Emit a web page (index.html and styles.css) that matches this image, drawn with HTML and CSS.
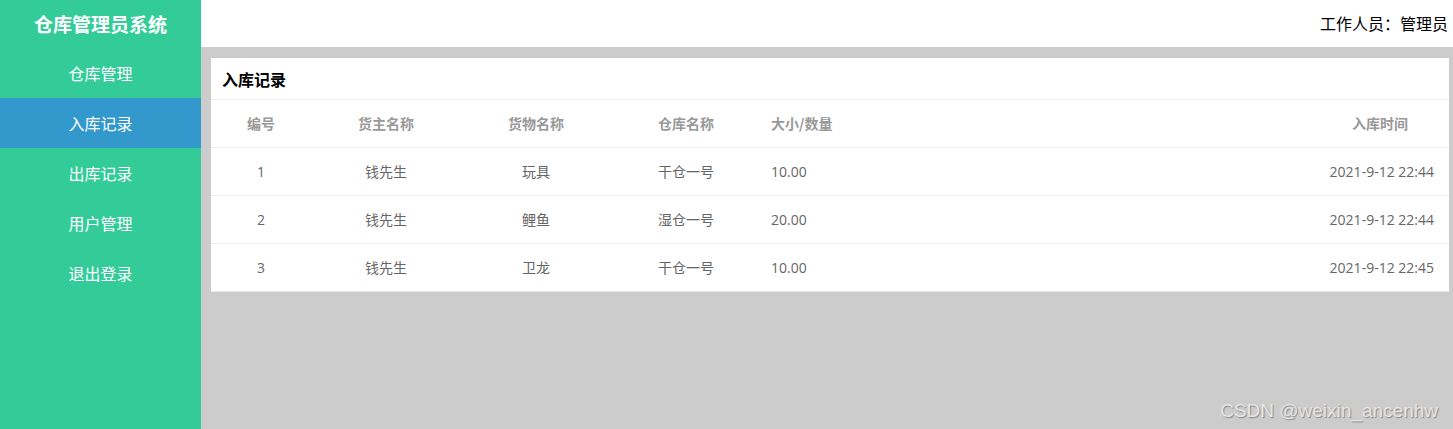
FILE: index.html
```html
<!DOCTYPE html>
<html lang="zh-CN">
<head>
<meta charset="utf-8">
<title>仓库管理员系统</title>
<link rel="stylesheet" href="styles.css">
</head>
<body>
<div class="app">
  <aside class="sidebar">
    <div class="brand">仓库管理员系统</div>
    <nav class="menu">
      <a class="menu-item">仓库管理</a>
      <a class="menu-item active">入库记录</a>
      <a class="menu-item">出库记录</a>
      <a class="menu-item">用户管理</a>
      <a class="menu-item">退出登录</a>
    </nav>
  </aside>
  <div class="main">
    <header class="topbar">工作人员：管理员</header>
    <section class="content">
      <div class="card">
        <div class="card-title">入库记录</div>
        <table class="records">
          <colgroup>
            <col class="c-id"><col class="c-mid"><col class="c-mid"><col class="c-mid"><col><col class="c-time">
          </colgroup>
          <thead>
            <tr>
              <th class="center">编号</th>
              <th class="center">货主名称</th>
              <th class="center">货物名称</th>
              <th class="center">仓库名称</th>
              <th class="left">大小/数量</th>
              <th class="center">入库时间</th>
            </tr>
          </thead>
          <tbody>
            <tr>
              <td class="center">1</td><td class="center">钱先生</td><td class="center">玩具</td><td class="center">干仓一号</td><td class="left">10.00</td><td class="right">2021-9-12 22:44</td>
            </tr>
            <tr>
              <td class="center">2</td><td class="center">钱先生</td><td class="center">鲤鱼</td><td class="center">湿仓一号</td><td class="left">20.00</td><td class="right">2021-9-12 22:44</td>
            </tr>
            <tr>
              <td class="center">3</td><td class="center">钱先生</td><td class="center">卫龙</td><td class="center">干仓一号</td><td class="left">10.00</td><td class="right">2021-9-12 22:45</td>
            </tr>
          </tbody>
        </table>
      </div>
    </section>
  </div>
</div>
<div class="watermark">CSDN @weixin_ancenhw</div>
</body>
</html>
```

FILE: styles.css
```css
* { box-sizing: border-box; }
html, body { margin: 0; padding: 0; height: 100%; }
body {
  font-family: "Open Sans", "Noto Sans CJK SC", sans-serif;
  background: #cccccc;
  overflow: hidden;
}
.app {
  display: flex;
  height: 429px;
}
.sidebar {
  width: 201px;
  flex: none;
  background: #33cc99;
  color: #fff;
}
.brand {
  height: 48px;
  display: flex;
  align-items: center;
  justify-content: center;
  font-family: "Noto Sans CJK SC", sans-serif;
  font-size: 19px;
  font-weight: bold;
  padding-bottom: 1px;
}
.menu { display: flex; flex-direction: column; }
.menu-item {
  height: 50px;
  display: flex;
  align-items: center;
  justify-content: center;
  font-family: "Noto Sans CJK SC", sans-serif;
  font-size: 16px;
  color: #fff;
}
.menu-item.active { background: #3399cc; }
.main {
  flex: 1;
  display: flex;
  flex-direction: column;
  min-width: 0;
}
.topbar {
  height: 47px;
  background: #fff;
  display: flex;
  align-items: center;
  justify-content: flex-end;
  padding-right: 5px;
  padding-bottom: 1px;
  font-family: "Noto Sans CJK SC", sans-serif;
  font-size: 16px;
  color: #000;
}
.content {
  flex: 1;
  padding: 11px 4px 10px 10px;
}
.card {
  background: #fff;
}
.card-title {
  height: 42px;
  border-bottom: 1px solid #eeeeee;
  display: flex;
  align-items: center;
  padding-left: 11px;
  font-family: "Noto Sans CJK SC", sans-serif;
  font-size: 16px;
  font-weight: bold;
  color: #000;
}
.records {
  width: 100%;
  border-collapse: collapse;
  table-layout: fixed;
  font-size: 14px;
}
.c-id { width: 100px; }
.c-mid { width: 150px; }
.c-time { width: 138px; }
.records th, .records td {
  height: 48px;
  padding: 0;
  border-bottom: 1px solid #eeeeee;
  vertical-align: middle;
}
.records thead th { height: 47px; }
.records tbody tr:last-child td { border-bottom: 1px solid #e6e6e6; }
.records th {
  color: #999;
  font-weight: bold;
  font-family: "Noto Sans CJK SC", sans-serif;
}
.records td { color: #666; }
.center { text-align: center; }
.left { text-align: left; padding-left: 10px !important; }
.right { text-align: right; padding-right: 15px !important; }
.watermark {
  position: absolute;
  right: 15px;
  bottom: 7px;
  font-family: "Liberation Sans", Arial, sans-serif;
  font-size: 19px;
  color: #e6e6e6;
  text-shadow: 1px 1px 1px #888;
}
```
